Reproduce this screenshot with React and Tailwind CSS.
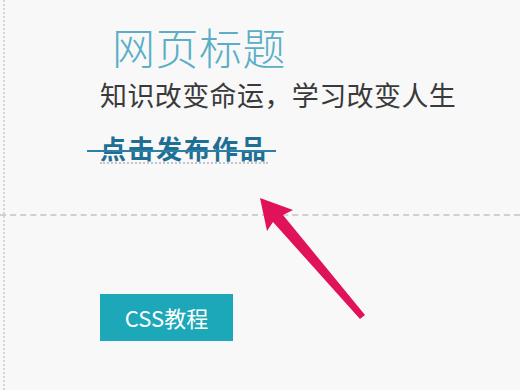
import React from 'react';

const Arrow = () => (
  <svg className="absolute left-0 top-0" width="520" height="390" viewBox="0 0 520 390">
    <polygon
      points="260,198 293,210 283,215 365,315 360,319 273,222 267,231"
      fill="#e0125a"
    />
  </svg>
);

export default function App() {
  return (
    <div
      className="relative w-[520px] h-[390px] overflow-hidden bg-[#f8f8f8]"
      style={{ fontFamily: '"Noto Sans CJK SC", "Noto Sans", sans-serif' }}
    >
      <div className="absolute left-[3px] top-0 h-full border-l-2 border-dotted border-[#d6d6d6]" />

      <div className="pl-[100px] pt-[20px]">
        <h1 className="ml-[12px] text-[43px] leading-[52px] font-light text-[#5aafc6] tracking-[0.5px]">网页标题</h1>
        <p className="mt-[5px] text-[27px] leading-[36px] text-[#3a3a3a] tracking-[0.4px]">知识改变命运，学习改变人生</p>
        <div className="relative mt-[21px] inline-block">
          <span className="block border-b-2 border-dotted border-[#c4c4c4] text-[26px] leading-[28px] font-bold text-[#1f6f95] tracking-[2px]">
            点击发布作品
          </span>
          <span className="absolute left-[-13px] right-[-8px] top-[16px] h-[2px] bg-[#2c80a8]" />
        </div>
      </div>

      <div className="mt-[50px] border-t-2 border-dashed border-[#d0d0d0]" />

      <div className="pl-[100px] pt-[78px]">
        <div className="w-[133px] h-[47px] flex items-center justify-center bg-[#1da8b9] text-white text-[22px]">
          CSS教程
        </div>
      </div>

      <Arrow />
    </div>
  );
}
